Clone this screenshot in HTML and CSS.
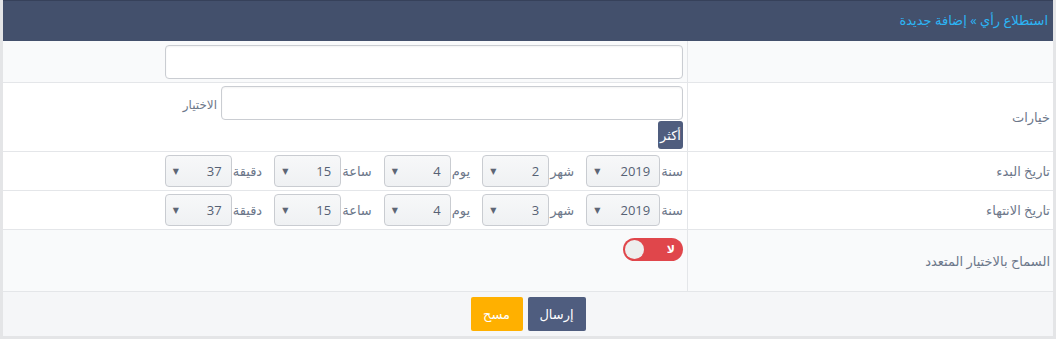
FILE: index.html
```html
<!DOCTYPE html>
<html lang="ar" dir="rtl">
<head>
    <meta charset="UTF-8">
    <meta name="viewport" content="width=device-width, initial-scale=1.0">
    <title>استطلاع رأي - إضافة جديدة</title>
    <link rel="stylesheet" href="styles.css">
</head>
<body>
    <div class="panel">
        <div class="panel-head">استطلاع رأي » إضافة جديدة</div>
        <form class="poll-form">
            <div class="row row-alt row-title">
                <div class="label"></div>
                <div class="value">
                    <input type="text" class="text-input wide">
                </div>
            </div>
            <div class="row row-options">
                <div class="label">خيارات</div>
                <div class="value">
                    <div class="option">
                        <input type="text" class="text-input">
                        <span class="option-label">الاختيار</span>
                    </div>
                    <button type="button" class="more">أكثر</button>
                </div>
            </div>
            <div class="row row-date">
                <div class="label">تاريخ البدء</div>
                <div class="value">
                    <span class="part"><span class="part-label">سنة</span><span class="pick year"><select><option>2019</option></select></span></span>
                    <span class="part"><span class="part-label">شهر</span><span class="pick"><select><option>2</option></select></span></span>
                    <span class="part"><span class="part-label">يوم</span><span class="pick"><select><option>4</option></select></span></span>
                    <span class="part"><span class="part-label">ساعة</span><span class="pick"><select><option>15</option></select></span></span>
                    <span class="part"><span class="part-label">دقيقة</span><span class="pick"><select><option>37</option></select></span></span>
                </div>
            </div>
            <div class="row row-date">
                <div class="label">تاريخ الانتهاء</div>
                <div class="value">
                    <span class="part"><span class="part-label">سنة</span><span class="pick year"><select><option>2019</option></select></span></span>
                    <span class="part"><span class="part-label">شهر</span><span class="pick"><select><option>3</option></select></span></span>
                    <span class="part"><span class="part-label">يوم</span><span class="pick"><select><option>4</option></select></span></span>
                    <span class="part"><span class="part-label">ساعة</span><span class="pick"><select><option>15</option></select></span></span>
                    <span class="part"><span class="part-label">دقيقة</span><span class="pick"><select><option>37</option></select></span></span>
                </div>
            </div>
            <div class="row row-alt row-multi">
                <div class="label">السماح بالاختيار المتعدد</div>
                <div class="value">
                    <span class="toggle"><span class="knob"></span><span class="toggle-text">لا</span></span>
                </div>
            </div>
        </form>
        <div class="actions">
            <button type="submit" class="btn btn-send">إرسال</button>
            <button type="reset" class="btn btn-clear">مسح</button>
        </div>
    </div>
</body>
</html>
```

FILE: styles.css
```css
html, body {
    margin: 0;
    padding: 0;
}
body {
    font-family: "Open Sans", "DejaVu Sans", sans-serif;
    font-size: 13px;
    background-color: #e4e5e7;
    color: #6c778a;
    padding: 0 3px 4px 3px;
}
.panel {
    background: #ffffff;
}
.panel-head {
    height: 41px;
    box-sizing: border-box;
    background-color: #43506c;
    border-top: 1px solid #36415a;
    color: #2cb4f4;
    font-size: 13px;
    line-height: 39px;
    padding-right: 5px;
}
.row {
    display: grid;
    grid-template-columns: 366px 1fr;
    border-bottom: 1px solid #e4e6e9;
    box-sizing: border-box;
}
.row-alt {
    background-color: #f9fafb;
}
.label {
    display: flex;
    align-items: center;
    padding-right: 3px;
    border-left: 1px solid #e4e6e9;
    font-size: 13px;
}
.value {
    padding: 0 4px;
}
.row-title { height: 42px; }
.row-title .value { padding-top: 4px; }
.row-options { height: 69px; }
.row-options .value { padding-top: 3px; }
.row-date { height: 39px; }
.row-date .value {
    display: flex;
    align-items: center;
}
.row-multi { height: 62px; }
.row-multi .value { padding-top: 8px; }

.text-input {
    display: block;
    box-sizing: border-box;
    height: 34px;
    border: 1px solid #cacdd2;
    border-radius: 4px;
    background: #fff;
    box-shadow: inset 0 1px 2px rgba(0, 0, 0, 0.05);
    margin: 0;
}
.wide {
    width: 518px;
}
.option {
    display: flex;
    align-items: flex-start;
}
.option .text-input {
    width: 462px;
}
.option-label {
    margin-right: 4px;
    margin-top: 10px;
    font-size: 12px;
}
.more {
    display: block;
    margin-top: 1px;
    width: 25px;
    height: 28px;
    padding: 0;
    border: none;
    border-radius: 3px;
    background-color: #4f5d7e;
    color: #fff;
    font-family: "DejaVu Sans", sans-serif;
    font-size: 13px;
}

.part {
    display: flex;
    align-items: center;
    margin-left: 12px;
}
.part-label {
    margin-left: 1px;
    font-size: 13px;
}
.pick {
    position: relative;
    display: block;
}
.pick select {
    display: block;
    box-sizing: border-box;
    width: 67px;
    height: 32px;
    margin: 0;
    padding: 0 9px 0 20px;
    border: 1px solid #c9ccd1;
    border-radius: 4px;
    background: linear-gradient(#f7f8f9, #eff1f3);
    color: #566174;
    font-family: "Open Sans", sans-serif;
    font-size: 13px;
    -webkit-appearance: none;
    appearance: none;
}
.pick.year select {
    width: 74px;
}
.pick::after {
    content: "▼";
    position: absolute;
    left: 8px;
    top: 10px;
    font-size: 8px;
    color: #5d6675;
    pointer-events: none;
}

.toggle {
    position: relative;
    display: inline-flex;
    align-items: center;
    justify-content: flex-start;
    width: 60px;
    height: 23px;
    border-radius: 12px;
    background-color: #e0464b;
}
.knob {
    position: absolute;
    left: 2px;
    top: 2px;
    width: 19px;
    height: 19px;
    border-radius: 50%;
    background-color: #eeeeee;
}
.toggle-text {
    margin-right: 8px;
    color: #fff;
    font-weight: bold;
    font-size: 11px;
    font-family: "DejaVu Sans", sans-serif;
}

.actions {
    display: flex;
    justify-content: center;
    gap: 5px;
    height: 44px;
    box-sizing: border-box;
    padding-top: 5px;
    background-color: #f5f6f8;
}
.btn {
    height: 34px;
    border: none;
    border-radius: 2px;
    color: #fff;
    font-family: "DejaVu Sans", sans-serif;
    font-size: 13px;
    padding: 0;
}
.btn-send {
    width: 58px;
    background-color: #4f5d7f;
}
.btn-clear {
    width: 52px;
    background-color: #ffb000;
}
```
